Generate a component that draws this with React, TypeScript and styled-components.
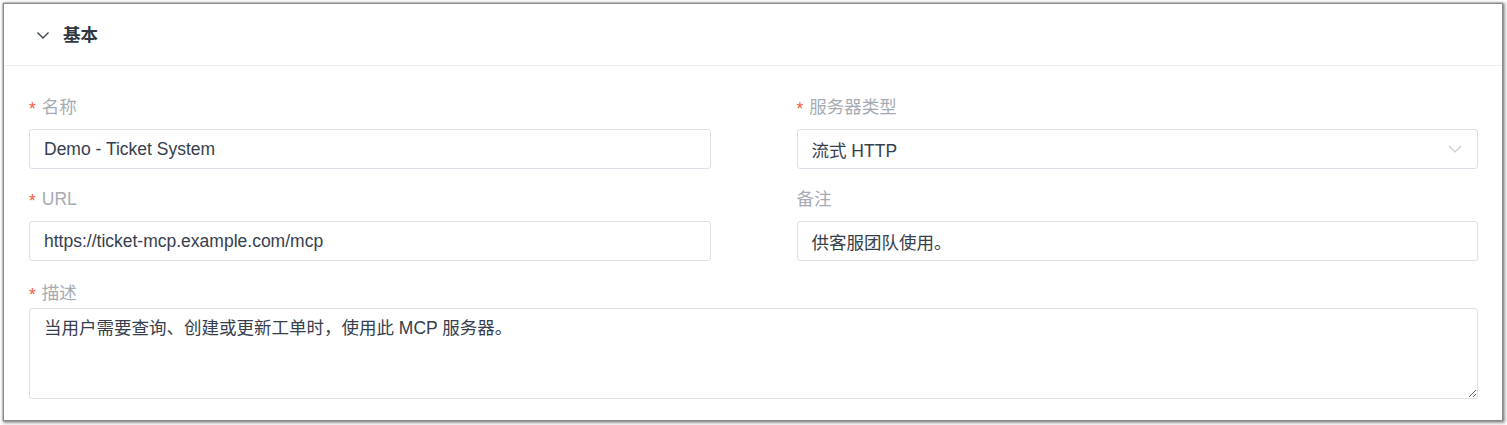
import React from "react";
import styled, { createGlobalStyle } from "styled-components";

const GlobalStyle = createGlobalStyle`
  html, body {
    margin: 0;
    padding: 0;
    background: #ffffff;
  }
  body {
    font-family: "Liberation Sans", "Noto Sans CJK SC", sans-serif;
    font-size: 17.5px;
  }
  * { box-sizing: border-box; }
`;

const Page = styled.div`
  padding: 3px 4px 4px 3px;
`;

const Card = styled.section`
  width: 1500px;
  height: 418px;
  background: #ffffff;
  border: 1px solid #8a8a8a;
  box-shadow: 1px 1px 3px 1px rgba(0, 0, 0, 0.4), 0 0 2px rgba(0, 0, 0, 0.35);
  display: flex;
  flex-direction: column;
  overflow: hidden;
`;

const Header = styled.header`
  height: 62px;
  flex: none;
  display: flex;
  align-items: center;
  gap: 13px;
  padding-left: 32px;
  border-bottom: 1px solid #ebeef5;
`;

const Chevron = styled.svg`
  width: 14px;
  height: 14px;
  color: #3d4654;
  flex: none;
`;

const Title = styled.h2`
  margin: 0;
  font-size: 17.5px;
  font-weight: 700;
  color: #2f3744;
  line-height: 22px;
`;

const Form = styled.div`
  padding: 30px 24px 0 25px;
  display: grid;
  grid-template-columns: 1fr 1fr;
  column-gap: 86px;
  row-gap: 19px;
`;

const Field = styled.div<{ $wide?: boolean; $gap: number }>`
  display: flex;
  flex-direction: column;
  gap: ${(p) => p.$gap}px;
  grid-column: ${(p) => (p.$wide ? "1 / -1" : "auto")};
  margin-top: ${(p) => (p.$wide ? "2px" : "0")};
`;

const Label = styled.label<{ $required?: boolean }>`
  display: flex;
  align-items: center;
  line-height: 22px;
  height: 22px;
  color: #a6abb3;
  font-size: 17.5px;

  &::before {
    content: ${(p) => (p.$required ? '"*"' : '""')};
    display: ${(p) => (p.$required ? "inline-block" : "none")};
    color: #f2603c;
    margin-right: 6px;
    font-size: 17.5px;
    position: relative;
    top: 2px;
  }
`;

const TextInput = styled.input`
  height: 40px;
  width: 100%;
  border: 1px solid #dcdfe6;
  border-radius: 3px;
  padding: 0 14px;
  font: inherit;
  font-size: 17.5px;
  color: #36404d;
  background: #ffffff;
  outline: none;
`;

const SelectBox = styled.div`
  height: 40px;
  width: 100%;
  border: 1px solid #dcdfe6;
  border-radius: 3px;
  padding: 0 15px 0 14px;
  display: flex;
  align-items: center;
  justify-content: space-between;
  color: #36404d;
  font-size: 17.5px;
`;

const SelectArrow = styled.svg`
  width: 14px;
  height: 10px;
  color: #c6cad1;
`;

const TextArea = styled.textarea`
  height: 91px;
  width: 100%;
  border: 1px solid #dcdfe6;
  border-radius: 3px;
  padding: 8px 14px;
  font: inherit;
  font-size: 17.5px;
  line-height: 22px;
  color: #36404d;
  resize: vertical;
  outline: none;
`;

export default function App() {
  return (
    <>
      <GlobalStyle />
      <Page>
        <Card>
          <Header>
            <Chevron viewBox="0 0 14 14" fill="none">
              <path d="M1.5 4.5 L7 10 L12.5 4.5" stroke="currentColor" strokeWidth="1.4" />
            </Chevron>
            <Title>基本</Title>
          </Header>
          <Form>
            <Field $gap={11}>
              <Label $required>名称</Label>
              <TextInput defaultValue="Demo - Ticket System" />
            </Field>
            <Field $gap={11}>
              <Label $required>服务器类型</Label>
              <SelectBox>
                <span>流式 HTTP</span>
                <SelectArrow viewBox="0 0 14 10" fill="none">
                  <path d="M1 2 L7 8 L13 2" stroke="currentColor" strokeWidth="1.2" />
                </SelectArrow>
              </SelectBox>
            </Field>
            <Field $gap={11}>
              <Label $required>URL</Label>
              <TextInput defaultValue="https://ticket-mcp.example.com/mcp" />
            </Field>
            <Field $gap={11}>
              <Label>备注</Label>
              <TextInput defaultValue="供客服团队使用。" />
            </Field>
            <Field $wide $gap={4}>
              <Label $required>描述</Label>
              <TextArea defaultValue="当用户需要查询、创建或更新工单时，使用此 MCP 服务器。" />
            </Field>
          </Form>
        </Card>
      </Page>
    </>
  );
}
